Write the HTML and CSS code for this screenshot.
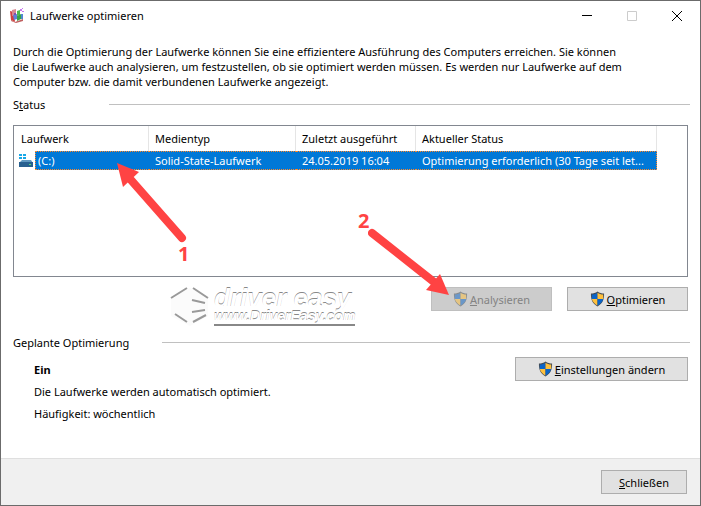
FILE: index.html
```html
<!DOCTYPE html>
<html lang="de">

<head>
    <meta charset="UTF-8">
    <meta name="viewport" content="width=device-width, initial-scale=1.0">
    <title>Laufwerke optimieren</title>
    <link rel="stylesheet" href="styles.css">
</head>

<body>
    <svg class="defs" aria-hidden="true">
        <symbol id="shield" viewBox="0 0 16 16">
            <path d="M8 0C6 1.600 3.500 2.200 1 2.200C.8 8.500 2.500 13 8 16C13.500 13 15.200 8.500 15 2.200C12.500 2.200 10 1.600 8 0Z" fill="#444b54" />
            <path d="M8 1.200V8H2C1.900 6.500 1.900 5 2 3.200C4.200 3.100 6.300 2.500 8 1.200Z" fill="#0a64c8" />
            <path d="M8 1.200V8H14C14.100 6.500 14.100 5 14 3.200C11.800 3.100 9.700 2.500 8 1.200Z" fill="#ffc03c" />
            <path d="M2 8H8V15C4.600 13.100 2.600 10.800 2 8Z" fill="#ffc03c" />
            <path d="M14 8H8V15C11.400 13.100 13.400 10.800 14 8Z" fill="#0a64c8" />
        </symbol>
    </svg>

    <div class="window">
        <header class="titlebar">
            <svg class="app-icon" viewBox="0 0 16 16">
                <path d="M1 3L5 4L6 14L2 12Z" fill="#d04040" />
                <path d="M6 14L14 11V13L7 15L2 13V12Z" fill="#c06060" />
                <path d="M3 2L7 1V7L3 8Z" fill="#d88890" />
                <path d="M8 3L11 2V7L8 8Z" fill="#50b850" />
                <path d="M4 7L8 6V11L5 12Z" fill="#6080d8" />
                <path d="M8 8L12 6V11L8 13Z" fill="#38a048" />
                <path d="M12 6L14 6V11L12 11Z" fill="#5088d0" />
                <path d="M5 5h2v2h-2z" fill="#8050b0" />
                <path d="M11 1h2v2h-2zM13 0h1v1h-1zM13 3h2v1h-2z" fill="#c878f0" />
            </svg>
            <h1 class="title">Laufwerke optimieren</h1>
            <div class="window-btns">
                <button class="window-btn" aria-label="Minimieren"><svg viewBox="0 0 10 10"><path d="M0 4.500H10" stroke="#000" /></svg></button>
                <button class="window-btn" aria-label="Maximieren" disabled><svg viewBox="0 0 10 10"><path d="M.5 .5H9.500V9.500H.5Z" fill="none" stroke="#ccc" /></svg></button>
                <button class="window-btn" aria-label="Fenster schließen"><svg viewBox="0 0 10 10"><path d="M0 0L10 10M10 0L0 10" stroke="#000" /></svg></button>
            </div>
        </header>

        <main class="content">
            <p class="intro">Durch die Optimierung der Laufwerke können Sie eine effizientere Ausführung des Computers erreichen. Sie können<br>die Laufwerke auch analysieren, um festzustellen, ob sie optimiert werden müssen. Es werden nur Laufwerke auf dem<br>Computer bzw. die damit verbundenen Laufwerke angezeigt.</p>

            <h2 class="group-title status-title"><span>S<u>t</u>atus</span></h2>
            <div class="list">
                <table class="drives">
                    <thead>
                        <tr>
                            <th class="col-drive">Laufwerk</th>
                            <th class="col-type">Medientyp</th>
                            <th class="col-date">Zuletzt ausgeführt</th>
                            <th class="col-status">Aktueller Status</th>
                        </tr>
                    </thead>
                    <tbody>
                        <tr class="selected">
                            <td class="drive">
                                <div class="drive-cell">
                                    <svg class="drive-icon" viewBox="0 0 16 14">
                                        <path d="M1 0h3v2h-3zM5 0h3v2h-3zM1 3h3v2h-3zM5 3h3v2h-3z" fill="#18a8e8" />
                                        <path d="M4 6H13L15 9H1Z" fill="#6098c0" />
                                        <path d="M1 8H15V13H1Z" fill="#286090" />
                                        <path d="M11 10h2v1h-2z" fill="#50e070" />
                                    </svg>
                                    <span>(C:)</span>
                                </div>
                            </td>
                            <td>Solid-State-Laufwerk</td>
                            <td>24.05.2019 16:04</td>
                            <td class="last">Optimierung erforderlich (30 Tage seit let...</td>
                        </tr>
                    </tbody>
                </table>
            </div>

            <div class="actions">
                <div class="brand">
                    <svg class="brand-logo" viewBox="0 0 40 40">
                        <path d="M1 11L20 1L38 11V29L20 39L1 29Z" fill="#fbfbfb" />
                        <path d="M1 11L17 1M23 1L38 11M5 27L17 35M23 35L36 28M22 13L35 16M22 25L35 23" fill="none" stroke="#999" stroke-width="2" />
                    </svg>
                    <div class="brand-text">
                        <span class="brand-name">driver easy</span>
                        <span class="brand-url">www.DriverEasy.com</span>
                    </div>
                </div>
                <button class="btn" disabled><svg class="shield"><use href="#shield" /></svg><span><u>A</u>nalysieren</span></button>
                <button class="btn"><svg class="shield"><use href="#shield" /></svg><span><u>O</u>ptimieren</span></button>
            </div>

            <h2 class="group-title plan-title"><span>Geplante Optimierung</span></h2>
            <div class="plan">
                <div class="plan-text">
                    <p><b>Ein</b></p>
                    <p>Die Laufwerke werden automatisch optimiert.</p>
                    <p>Häufigkeit: wöchentlich</p>
                </div>
                <button class="btn btn-wide"><svg class="shield"><use href="#shield" /></svg><span><u>E</u>instellungen ändern</span></button>
            </div>
        </main>

        <footer class="footer">
            <button class="btn btn-close"><span><u>S</u>chließen</span></button>
        </footer>

        <!-- numbered step arrows over the dialog -->
        <svg class="arrow arrow-1" viewBox="0 0 70 82">
            <path d="M65 75L14 17" stroke="#ff4343" stroke-width="8" stroke-linecap="round" />
            <path d="M0 0L22 9L6 24Z" fill="#ff4343" />
        </svg>
        <span class="step step-1">1</span>
        <svg class="arrow arrow-2" viewBox="0 0 82 70">
            <path d="M4 5L66 54" stroke="#ff4343" stroke-width="8" stroke-linecap="round" />
            <path d="M81 67L72 46L58 62Z" fill="#ff4343" />
        </svg>
        <span class="step step-2">2</span>
    </div>
</body>

</html>
```

FILE: styles.css
```css
* {
    margin: 0;
    padding: 0;
    box-sizing: border-box;
}

body {
    font-family: "Noto Sans", "Open Sans", sans-serif;
    font-size: 11px;
    line-height: 15px;
    color: #000;
}

.defs {
    position: absolute;
    width: 0;
    height: 0;
}

.window {
    position: relative;
    display: flex;
    flex-direction: column;
    min-height: 100vh;
    border: 1px solid #6b6b6b;
    background-color: #fff;
}

.titlebar {
    display: flex;
    align-items: center;
    height: 29px;
    padding: 0 1px 0 8px;
}

.app-icon {
    width: 16px;
    height: 16px;
    margin-right: 5px;
}

.title {
    flex: 1;
    font-size: 11px;
    font-weight: normal;
}

.window-btns {
    display: flex;
}

.window-btn {
    display: flex;
    align-items: center;
    justify-content: center;
    width: 45px;
    height: 28px;
    border: none;
    background: none;
}

.window-btn svg {
    width: 10px;
    height: 10px;
}

.content {
    flex: 1;
    padding: 14px 12px 0;
}

.intro {
    white-space: nowrap;
}

.group-title {
    display: flex;
    align-items: center;
    font-size: 11px;
    font-weight: normal;
}

.group-title::after {
    content: "";
    flex: 1;
    height: 1px;
    margin-right: -2px;
    background-color: #c0c0c0;
}

.status-title {
    margin-top: 8px;
}

.status-title span {
    width: 96px;
}

.plan-title {
    margin-top: 2px;
}

.plan-title span {
    width: 149px;
}

.list {
    height: 152px;
    margin-top: 13px;
    border: 1px solid #828790;
}

.drives {
    width: 643px;
    table-layout: fixed;
    border-collapse: separate;
    border-spacing: 0;
}

.drives th {
    height: 25px;
    padding: 0 6px;
    border-right: 1px solid #e5e5e5;
    font-weight: normal;
    text-align: left;
}

.drives th:first-child {
    padding-left: 7px;
}

.drives td {
    height: 19px;
    padding: 0 6px;
    border-top: 1px dotted #ff8728;
    border-bottom: 1px dotted #ff8728;
    white-space: nowrap;
    color: #fff;
    background-color: #0078d7;
}

.drives .last {
    border-right: 1px dotted #ff8728;
}

.col-drive {
    width: 135px;
}

.col-type {
    width: 147px;
}

.col-date {
    width: 120px;
}

.drives .drive {
    padding: 0;
    border: none;
    background: none;
}

.drive-cell {
    display: flex;
    align-items: center;
    gap: 1px;
    height: 19px;
    padding-left: 4px;
}

.drive-cell span {
    flex: 1;
    height: 19px;
    padding-left: 2px;
    border: 1px dotted #ff8728;
    border-right: none;
    line-height: 17px;
    background-color: #0078d7;
}

.drive-icon {
    width: 16px;
    height: 14px;
}

.actions {
    display: flex;
    gap: 15px;
    margin-top: 10px;
}

.brand {
    display: flex;
    flex: 1;
    gap: 4px;
    height: 46px;
    padding-left: 157px;
}

.brand-logo {
    width: 40px;
    height: 40px;
}

.brand-text {
    display: flex;
    flex-direction: column;
    font-family: "Liberation Sans", sans-serif;
    font-style: italic;
    font-weight: bold;
    color: #fff;
    white-space: nowrap;
    text-shadow: 0 -1px 0 #888;
}

.brand-name {
    font-size: 26px;
    line-height: 22px;
}

.brand-url {
    border-bottom: 2px solid #888;
    font-size: 14px;
    line-height: 15px;
}

.btn {
    display: flex;
    align-items: center;
    justify-content: center;
    gap: 2px;
    width: 121px;
    height: 24px;
    border: 1px solid #adadad;
    font: inherit;
    color: #000;
    background-color: #e1e1e1;
}

.btn:disabled {
    border-color: #bfbfbf;
    color: #838383;
    background-color: #ccc;
}

.btn:disabled .shield {
    opacity: 0.5;
}

.shield {
    width: 15px;
    height: 16px;
}

.plan {
    display: flex;
    justify-content: space-between;
    align-items: flex-start;
    margin-top: 7px;
}

.plan-text {
    padding: 5px 0 0 21px;
}

.plan-text p {
    margin-bottom: 7px;
}

.btn-wide {
    width: 173px;
}

.footer {
    display: flex;
    justify-content: flex-end;
    padding: 11px 13px;
    border-top: 1px solid #dfdfdf;
    background-color: #f0f0f0;
}

.btn-close {
    width: 86px;
}

.arrow {
    position: absolute;
    fill: none;
}

.arrow-1 {
    top: 162px;
    left: 116px;
    width: 70px;
    height: 82px;
}

.arrow-2 {
    top: 227px;
    left: 367px;
    width: 82px;
    height: 70px;
}

.step {
    position: absolute;
    font-size: 20px;
    font-weight: bold;
    line-height: 20px;
    color: #ff4343;
}

.step-1 {
    top: 243px;
    left: 177px;
}

.step-2 {
    top: 210px;
    left: 357px;
}
```
